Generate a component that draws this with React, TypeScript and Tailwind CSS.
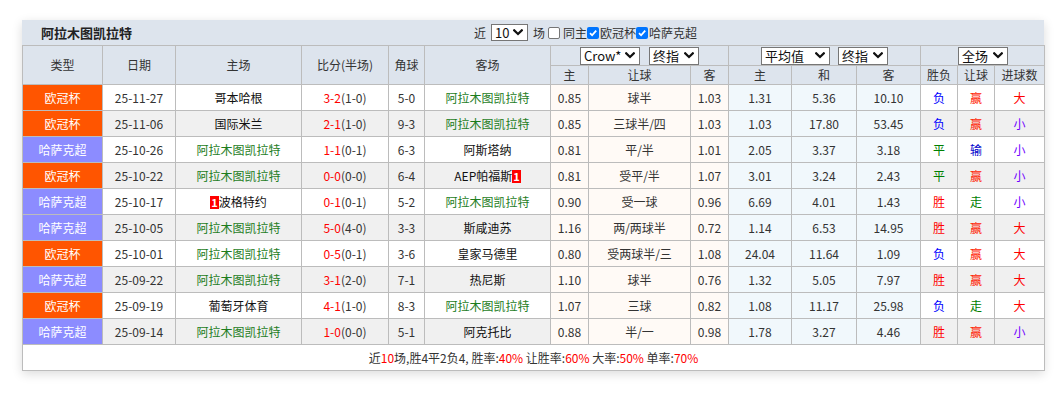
import React from 'react';

const HEAD = 'bg-[#dde4ed]';
const ODDS = 'bg-[#fffaf6]';
const AVG = 'bg-[#f1f8fc]';

type Row = {
  type: '欧冠杯' | '哈萨克超';
  date: string;
  home: string;
  score: string;
  half: string;
  corner: string;
  away: string;
  o1: string;
  line: string;
  o2: string;
  a1: string;
  a2: string;
  a3: string;
  wl: string;
  hc: string;
  ou: string;
  homeBadge?: boolean;
  awayBadge?: boolean;
};

const TEAM = '阿拉木图凯拉特';

const rows: Row[] = [
  { type: '欧冠杯', date: '25-11-27', home: '哥本哈根', score: '3-2', half: '(1-0)', corner: '5-0', away: TEAM, o1: '0.85', line: '球半', o2: '1.03', a1: '1.31', a2: '5.36', a3: '10.10', wl: '负', hc: '赢', ou: '大' },
  { type: '欧冠杯', date: '25-11-06', home: '国际米兰', score: '2-1', half: '(1-0)', corner: '9-3', away: TEAM, o1: '0.85', line: '三球半/四', o2: '1.03', a1: '1.03', a2: '17.80', a3: '53.45', wl: '负', hc: '赢', ou: '小' },
  { type: '哈萨克超', date: '25-10-26', home: TEAM, score: '1-1', half: '(0-1)', corner: '6-3', away: '阿斯塔纳', o1: '0.81', line: '平/半', o2: '1.01', a1: '2.05', a2: '3.37', a3: '3.18', wl: '平', hc: '输', ou: '小' },
  { type: '欧冠杯', date: '25-10-22', home: TEAM, score: '0-0', half: '(0-0)', corner: '6-4', away: 'AEP帕福斯', awayBadge: true, o1: '0.81', line: '受平/半', o2: '1.07', a1: '3.01', a2: '3.24', a3: '2.43', wl: '平', hc: '赢', ou: '小' },
  { type: '哈萨克超', date: '25-10-17', home: '波格特约', homeBadge: true, score: '0-1', half: '(0-1)', corner: '5-2', away: TEAM, o1: '0.90', line: '受一球', o2: '0.96', a1: '6.69', a2: '4.01', a3: '1.43', wl: '胜', hc: '走', ou: '小' },
  { type: '哈萨克超', date: '25-10-05', home: TEAM, score: '5-0', half: '(4-0)', corner: '3-3', away: '斯咸迪苏', o1: '1.16', line: '两/两球半', o2: '0.72', a1: '1.14', a2: '6.53', a3: '14.95', wl: '胜', hc: '赢', ou: '大' },
  { type: '欧冠杯', date: '25-10-01', home: TEAM, score: '0-5', half: '(0-1)', corner: '3-6', away: '皇家马德里', o1: '0.80', line: '受两球半/三', o2: '1.08', a1: '24.04', a2: '11.64', a3: '1.09', wl: '负', hc: '赢', ou: '大' },
  { type: '哈萨克超', date: '25-09-22', home: TEAM, score: '3-1', half: '(2-0)', corner: '7-1', away: '热尼斯', o1: '1.10', line: '球半', o2: '0.76', a1: '1.32', a2: '5.05', a3: '7.97', wl: '胜', hc: '赢', ou: '大' },
  { type: '欧冠杯', date: '25-09-19', home: '葡萄牙体育', score: '4-1', half: '(1-0)', corner: '8-3', away: TEAM, o1: '1.07', line: '三球', o2: '0.82', a1: '1.08', a2: '11.17', a3: '25.98', wl: '负', hc: '走', ou: '大' },
  { type: '哈萨克超', date: '25-09-14', home: TEAM, score: '1-0', half: '(0-0)', corner: '5-1', away: '阿克托比', o1: '0.88', line: '半/一', o2: '0.98', a1: '1.78', a2: '3.27', a3: '4.46', wl: '胜', hc: '赢', ou: '小' },
];

const resultColor: Record<string, string> = {
  负: 'text-[#0000ff]',
  平: 'text-[#008000]',
  胜: 'text-[#ff0000]',
  赢: 'text-[#ff2200]',
  输: 'text-[#0000cc]',
  走: 'text-[#008000]',
  大: 'text-[#ff0000]',
  小: 'text-[#7000ff]',
};

function Chevron() {
  return (
    <svg width="10" height="7" viewBox="0 0 10 7" className="shrink-0">
      <path d="M1.2 1.3 L5 5 L8.8 1.3" fill="none" stroke="#111" strokeWidth="2.2" strokeLinecap="square" />
    </svg>
  );
}

function Select({ label, w, h = 'h-[18px]' }: { label: string; w: string; h?: string }) {
  return (
    <span className={`inline-flex items-center justify-between border border-[#767676] bg-white pl-[3px] pr-[4px] text-[13px] text-[#111] leading-none ${w} ${h}`}>
      <span>{label}</span>
      <Chevron />
    </span>
  );
}

function Check({ on }: { on: boolean }) {
  if (!on) {
    return <span className="inline-block w-[12px] h-[12px] rounded-[2px] border border-[#767676] bg-white mx-[3px]" />;
  }
  return (
    <span className="inline-flex items-center justify-center w-[12px] h-[12px] rounded-[2px] bg-[#0075ff] mr-[1px]">
      <svg width="10" height="10" viewBox="0 0 10 10">
        <path d="M2 5.2 L4.1 7.3 L8.2 2.6" fill="none" stroke="#fff" strokeWidth="1.8" />
      </svg>
    </span>
  );
}

function Badge() {
  return <span className="inline-block bg-[#ff0000] text-white font-bold text-[11px] leading-[13px] px-[1px]">1</span>;
}

function Team({ name, badge, before }: { name: string; badge?: boolean; before?: boolean }) {
  const green = name === TEAM;
  return (
    <span className={green ? 'text-[#1d7d1d]' : 'text-[#111]'}>
      {badge && before && <Badge />}
      {name}
      {badge && !before && <Badge />}
    </span>
  );
}

const th = `border border-[#bcbcbc] ${HEAD} font-normal text-[#333]`;
const td = 'border border-[#bcbcbc] h-[26px] p-0';

export default function App() {
  return (
    <div className="w-[1064px] h-[394px] bg-white pt-[20px] pl-[22px]" style={{ fontFamily: '"Noto Sans CJK SC", "Noto Sans", sans-serif' }}>
      <div className="w-[1022px] shadow-[0_3px_10px_rgba(0,0,0,0.14)]">
        <div className={`flex items-center h-[25px] ${HEAD} text-[12px] text-[#333]`}>
          <div className="w-[452px] pl-[19px] font-bold text-[13px] text-[#222]">阿拉木图凯拉特</div>
          <div className="flex items-center">
            <span>近</span>
            <span className="ml-[5px] mr-[5px] flex"><Select label="10" w="w-[37px]" h="h-[17px]" /></span>
            <span>场</span>
            <Check on={false} />
            <span>同主</span>
            <Check on />
            <span>欧冠杯</span>
            <Check on />
            <span>哈萨克超</span>
          </div>
        </div>
        <table className="w-[1022px] table-fixed border-collapse text-[12px] text-center text-[#333]">
          <colgroup>
            <col className="w-[80px]" />
            <col className="w-[73px]" />
            <col className="w-[126px]" />
            <col className="w-[87px]" />
            <col className="w-[36px]" />
            <col className="w-[126px]" />
            <col className="w-[38px]" />
            <col className="w-[102px]" />
            <col className="w-[38px]" />
            <col className="w-[63px]" />
            <col className="w-[65px]" />
            <col className="w-[64px]" />
            <col className="w-[37px]" />
            <col className="w-[37px]" />
            <col className="w-[50px]" />
          </colgroup>
          <thead>
            <tr className="h-[20px]">
              <th rowSpan={2} className={th}>类型</th>
              <th rowSpan={2} className={th}>日期</th>
              <th rowSpan={2} className={th}>主场</th>
              <th rowSpan={2} className={th}>比分(半场)</th>
              <th rowSpan={2} className={th}>角球</th>
              <th rowSpan={2} className={th}>客场</th>
              <th colSpan={3} className={`${th} p-0`}>
                <div className="flex items-center justify-center gap-[9px]">
                  <Select label="Crow*" w="w-[60px]" />
                  <Select label="终指" w="w-[50px]" />
                </div>
              </th>
              <th colSpan={3} className={`${th} p-0`}>
                <div className="flex items-center justify-center gap-[8px]">
                  <Select label="平均值" w="w-[69px]" />
                  <Select label="终指" w="w-[50px]" />
                </div>
              </th>
              <th colSpan={3} className={`${th} p-0`}>
                <div className="flex items-center justify-center pl-[1px]">
                  <Select label="全场" w="w-[50px]" />
                </div>
              </th>
            </tr>
            <tr className="h-[19px]">
              <th className={th}>主</th>
              <th className={th}>让球</th>
              <th className={th}>客</th>
              <th className={th}>主</th>
              <th className={th}>和</th>
              <th className={th}>客</th>
              <th className={th}>胜负</th>
              <th className={th}>让球</th>
              <th className={th}>进球数</th>
            </tr>
          </thead>
          <tbody>
            {rows.map((r, i) => {
              const bg = i % 2 === 1 ? 'bg-[#f0f0f0]' : 'bg-white';
              return (
                <tr key={r.date}>
                  <td className={`${td} text-white ${r.type === '欧冠杯' ? 'bg-[#ff5500]' : 'bg-[#8c8cff]'}`}>{r.type}</td>
                  <td className={`${td} ${bg}`}>{r.date}</td>
                  <td className={`${td} ${bg}`}><Team name={r.home} badge={r.homeBadge} before /></td>
                  <td className={`${td} ${bg}`}>
                    <span className="text-[#ff0000]">{r.score}</span>
                    <span>{r.half}</span>
                  </td>
                  <td className={`${td} ${bg}`}>{r.corner}</td>
                  <td className={`${td} ${bg}`}><Team name={r.away} badge={r.awayBadge} /></td>
                  <td className={`${td} ${ODDS}`}>{r.o1}</td>
                  <td className={`${td} ${ODDS}`}>{r.line}</td>
                  <td className={`${td} ${ODDS}`}>{r.o2}</td>
                  <td className={`${td} ${AVG}`}>{r.a1}</td>
                  <td className={`${td} ${AVG}`}>{r.a2}</td>
                  <td className={`${td} ${AVG}`}>{r.a3}</td>
                  <td className={`${td} ${bg} ${resultColor[r.wl]}`}>{r.wl}</td>
                  <td className={`${td} ${bg} ${resultColor[r.hc]}`}>{r.hc}</td>
                  <td className={`${td} ${bg} ${resultColor[r.ou]}`}>{r.ou}</td>
                </tr>
              );
            })}
            <tr>
              <td colSpan={15} className={`${td} bg-white text-[#333]`}>
                近<span className="text-[#ff0000]">10</span>场,胜4平2负4, 胜率:<span className="text-[#ff0000]">40%</span> 让胜率:<span className="text-[#ff0000]">60%</span> 大率:<span className="text-[#ff0000]">50%</span> 单率:<span className="text-[#ff0000]">70%</span>
              </td>
            </tr>
          </tbody>
        </table>
      </div>
    </div>
  );
}
